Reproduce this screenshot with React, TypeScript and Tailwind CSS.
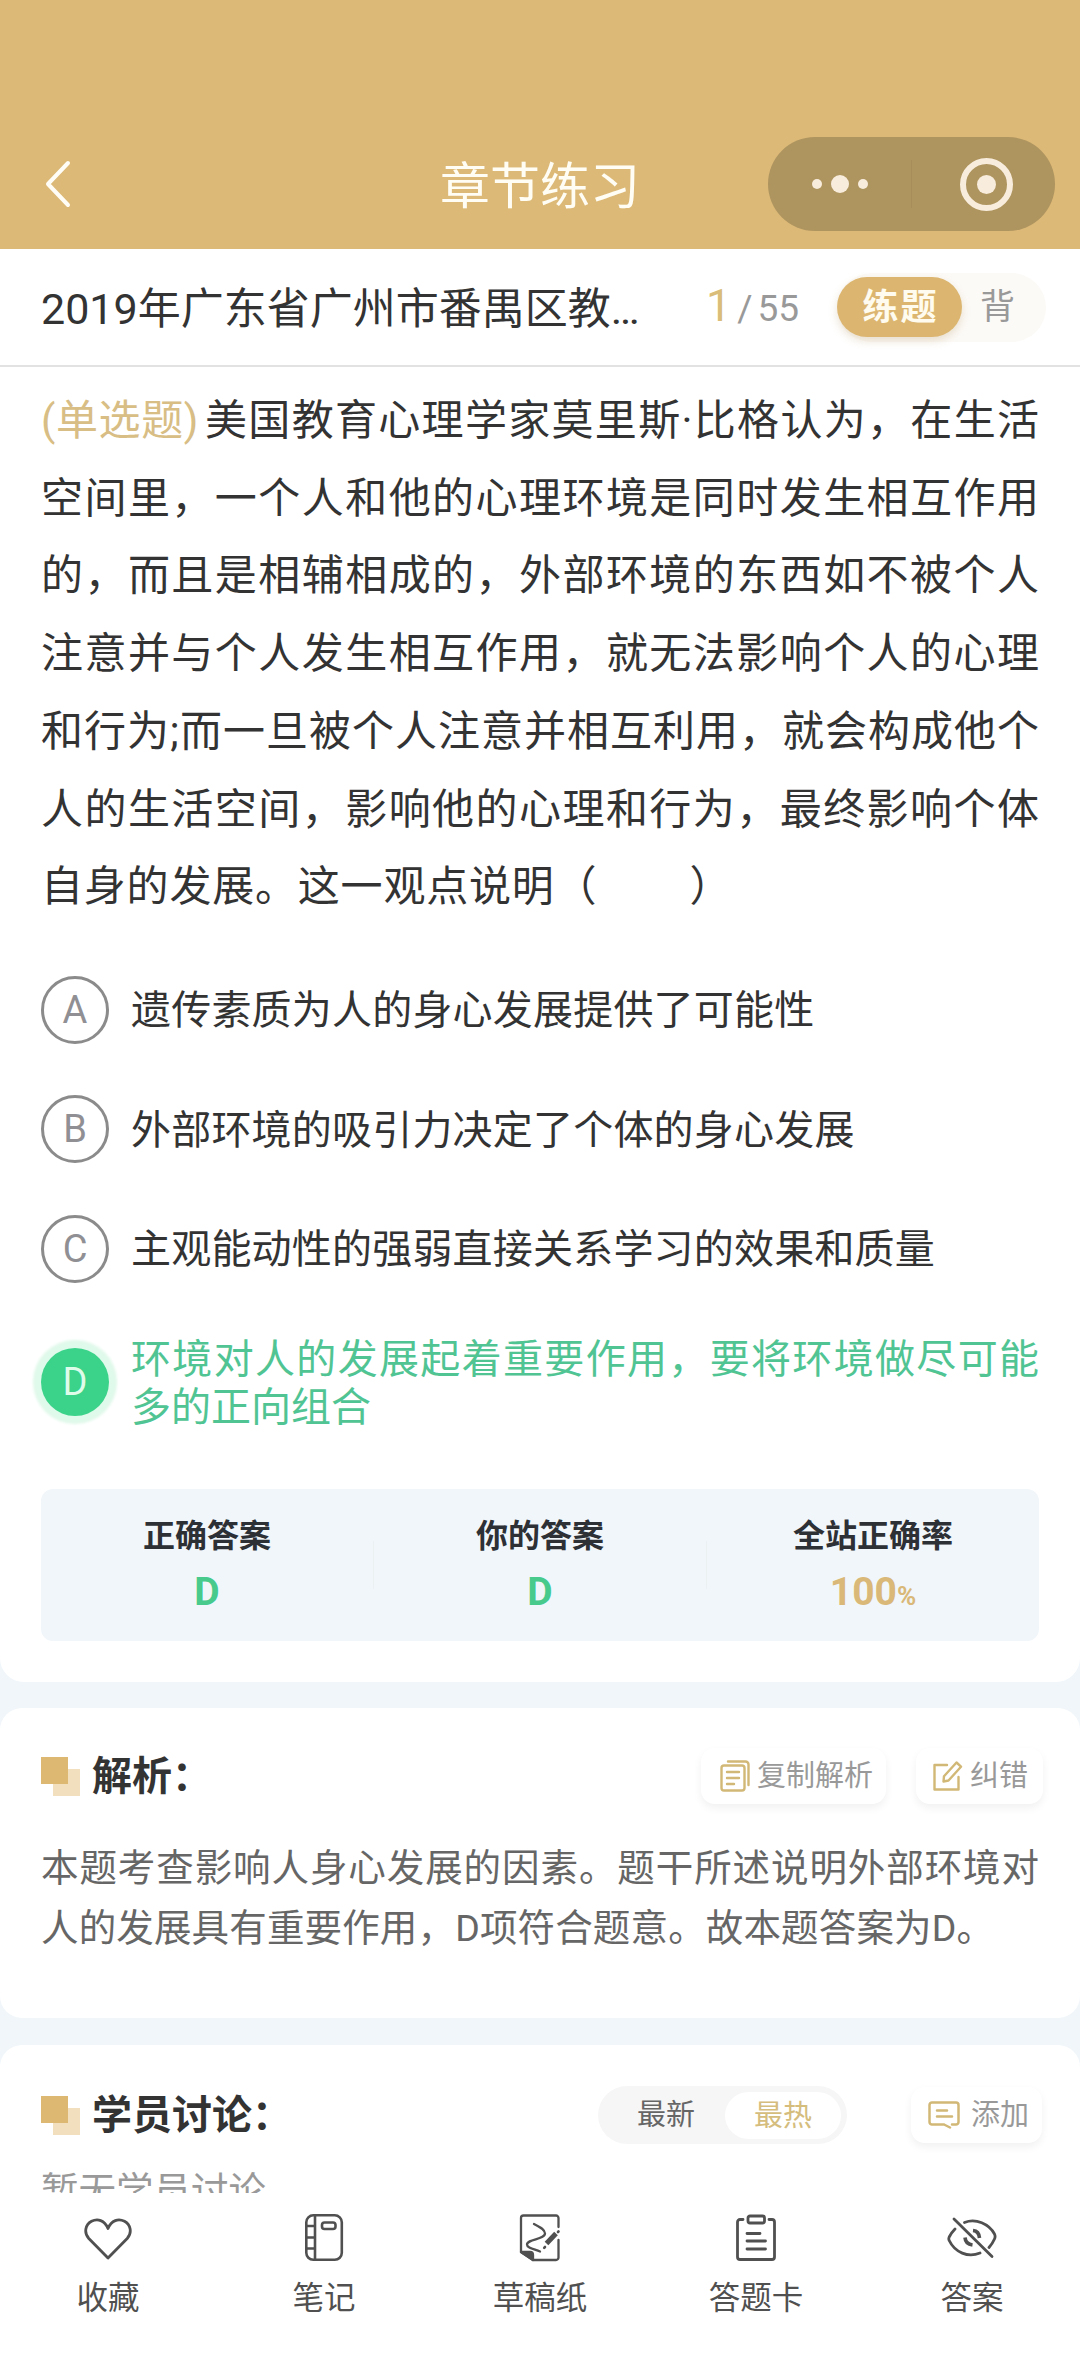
import React from "react";

const questionLines = [
  "空间里，一个人和他的心理环境是同时发生相互作用",
  "的，而且是相辅相成的，外部环境的东西如不被个人",
  "注意并与个人发生相互作用，就无法影响个人的心理",
  "和行为;而一旦被个人注意并相互利用，就会构成他个",
  "人的生活空间，影响他的心理和行为，最终影响个体",
];

const options = [
  { key: "A", text: "遗传素质为人的身心发展提供了可能性" },
  { key: "B", text: "外部环境的吸引力决定了个体的身心发展" },
  { key: "C", text: "主观能动性的强弱直接关系学习的效果和质量" },
];

function Header() {
  return (
    <header className="flex h-[249px] shrink-0 items-end bg-[#dcb977] pb-[18px]">
      <div className="flex h-[94px] w-full items-center justify-between pr-[25px] pl-[43px]">
        <svg width="287" height="50" viewBox="0 0 287 50" fill="none" className="block">
          <path d="M25 4 5 25l20 21" stroke="#fffdf6" strokeWidth="4" strokeLinecap="round" strokeLinejoin="round" />
        </svg>
        <h1 className="mr-[18px] pt-[6px] text-[50px] leading-[60px] text-[#fffdf4]">章节练习</h1>
        <div className="flex h-[94px] w-[287px] items-center rounded-full bg-[#ae945f]">
          <div className="flex w-[143px] items-center justify-center gap-[9px]">
            <span className="size-[10px] rounded-full bg-[#f8ecdc]" />
            <span className="size-[18px] rounded-full bg-[#f8ecdc]" />
            <span className="size-[10px] rounded-full bg-[#f8ecdc]" />
          </div>
          <span className="h-[48px] w-px bg-[#a68d5a]" />
          <div className="flex flex-1 justify-center pl-[5px]">
            <div className="flex size-[53px] items-center justify-center rounded-full border-[6px] border-[#f8ecdc]">
              <span className="size-[19px] rounded-full bg-[#f8ecdc]" />
            </div>
          </div>
        </div>
      </div>
    </header>
  );
}

function TitleRow() {
  return (
    <div className="flex h-[118px] shrink-0 items-center border-b-[2px] border-[#e2e2e2] pl-[41px]">
      <div className="w-[600px] pt-[3px] text-[43px] leading-[60px] whitespace-nowrap text-[#333]">2019年广东省广州市番禺区教…</div>
      <div className="ml-[65px] flex w-[131px] items-baseline leading-[60px] whitespace-nowrap text-[#999]">
        <span className="text-[45px] text-[#d9bd78]">1</span>
        <span className="ml-[6px] text-[37px]">/</span>
        <span className="ml-[5px] text-[37px]">55</span>
      </div>
      <div className="flex h-[69px] w-[209px] items-center rounded-full bg-[#fcfaf7]">
        <div className="h-[60px] w-[125px] rounded-full bg-[#dcb670] pt-px pl-[2px] text-center text-[36px] leading-[60px] font-bold tracking-[2px] text-[#fffbee] shadow-[0_4px_8px_rgba(190,160,110,0.3)]">
          练题
        </div>
        <div className="ml-[18px] pt-[2px] text-[35px] leading-[60px] text-[#999]">背</div>
      </div>
    </div>
  );
}

function Question() {
  return (
    <div className="mx-[41px] mt-[15px] text-[42px] leading-[77.7px] whitespace-nowrap text-[#333]">
      <div className="flex">
        <span className="w-[164px] shrink-0 tracking-[0.6px] text-[#d8bd84]">(单选题)</span>
        <span className="flex-1 [text-align-last:justify]">美国教育心理学家莫里斯·比格认为，在生活</span>
      </div>
      {questionLines.map((line) => (
        <div key={line} className="[text-align-last:justify]">
          {line}
        </div>
      ))}
      <div className="tracking-[0.8px]">
        自身的发展。这一观点说明（<span className="tracking-[4px]">　　</span>）
      </div>
    </div>
  );
}

function Options() {
  return (
    <div className="mx-[41px] mt-[50px] flex flex-col">
      {options.map((o) => (
        <div key={o.key} className="mb-[51.5px] flex h-[68px] items-center">
          <span className="flex size-[68px] items-center justify-center rounded-full border-[3px] border-[#8b8b8b] text-[38px] leading-none text-[#909094]">
            {o.key}
          </span>
          <span className="ml-[22px] pt-[3px] text-[40px] leading-[48px] tracking-[0.2px] whitespace-nowrap text-[#333]">{o.text}</span>
        </div>
      ))}
      <div className="flex h-[96px] items-center">
        <span className="flex size-[68px] shrink-0 items-center justify-center rounded-full bg-[#3ad389] text-[38px] leading-none text-[#dffbe9] shadow-[0_0_3px_8px_#dff9ea]">
          D
        </span>
        <div className="ml-[22px] w-[909px] pt-[4px] text-[40px] leading-[48px] whitespace-nowrap text-[#50c493]">
          <div className="[text-align-last:justify]">环境对人的发展起着重要作用，要将环境做尽可能</div>
          <div>多的正向组合</div>
        </div>
      </div>
    </div>
  );
}

function AnswerStats() {
  return (
    <div className="mx-[41px] mt-[58.6px] flex h-[152px] items-center rounded-[12px] bg-[#f1f6fa] text-center">
      <div className="flex-1">
        <div className="text-[32px] leading-[48px] font-bold text-[#2d3035]">正确答案</div>
        <div className="mt-[5px] h-[54px] text-[39px] leading-[54px] font-bold text-[#47ca8c]">D</div>
      </div>
      <span className="h-[48px] w-px bg-[#ebf0f3]" />
      <div className="flex-1">
        <div className="text-[32px] leading-[48px] font-bold text-[#2d3035]">你的答案</div>
        <div className="mt-[5px] h-[54px] text-[39px] leading-[54px] font-bold text-[#47ca8c]">D</div>
      </div>
      <span className="h-[48px] w-px bg-[#ebf0f3]" />
      <div className="flex-1">
        <div className="text-[32px] leading-[48px] font-bold text-[#2d3035]">全站正确率</div>
        <div className="mt-[5px] h-[54px] text-[39px] leading-[54px] font-bold text-[#d9b878]">
          100<span className="text-[26px] leading-none">%</span>
        </div>
      </div>
    </div>
  );
}

function SectionTitle({ children }: { children: React.ReactNode }) {
  return (
    <div className="flex items-center">
      <svg width="39" height="39" viewBox="0 0 39 39" className="block">
        <rect x="12" y="12" width="27" height="27" fill="#f1dfbd" />
        <rect width="27" height="27" fill="#dcb873" />
      </svg>
      <h2 className="ml-[12px] pt-[2px] text-[40px] leading-[56px] font-bold whitespace-nowrap text-[#333]">{children}</h2>
    </div>
  );
}

function Chip({ className, icon, label }: { className: string; icon: React.ReactNode; label: string }) {
  return (
    <div className={`flex h-[56px] items-center rounded-[14px] bg-white shadow-[0_4px_8px_rgba(0,0,0,0.06)] ${className}`}>
      {icon}
      <span className="text-[29px] leading-[40px] whitespace-nowrap text-[#999]">{label}</span>
    </div>
  );
}

const gold = "#d2b876";

const CopyIcon = (
  <svg width="30" height="32" viewBox="0 0 30 32" fill="none" stroke={gold} strokeWidth="2.4" strokeLinecap="round" strokeLinejoin="round" className="mr-[7px] block">
    <rect x="1.5" y="5.5" width="23" height="25" rx="2.5" />
    <path d="M8 1.5h17.5a3 3 0 0 1 3 3V25M7 12h12M7 18h12M7 24h7" />
  </svg>
);

const EditIcon = (
  <svg width="30" height="30" viewBox="0 0 30 30" fill="none" stroke={gold} strokeWidth="2.4" strokeLinecap="round" strokeLinejoin="round" className="mr-[7px] block">
    <path d="M14 4H1.5v24.500h24V16" />
    <path d="m23.500 1.500 4.500 4.200L15.500 19.500l-5 1 .5-5.300Z" />
  </svg>
);

const CommentIcon = (
  <svg width="32" height="28" viewBox="0 0 32 28" fill="none" stroke={gold} strokeWidth="2.500" strokeLinecap="round" strokeLinejoin="round" className="mr-[11px] block">
    <path d="M16 23.500H4A2.500 2.500 0 0 1 1.500 21V4A2.500 2.500 0 0 1 4 1.500h24A2.500 2.500 0 0 1 30.500 4v17a2.500 2.500 0 0 1-2.500 2.500h-4M16 23.500l6 3M9 9.500h10M9 15.500h15" />
  </svg>
);

function Analysis() {
  return (
    <section className="mt-[26px] h-[310px] shrink-0 rounded-[22px] bg-white px-[41px] pt-[39px]">
      <div className="flex h-[58px] items-center">
        <SectionTitle>解析：</SectionTitle>
        <div className="mr-[-4px] ml-auto flex gap-[30px]">
          <Chip className="w-[185px] pl-[19px]" icon={CopyIcon} label="复制解析" />
          <Chip className="w-[127px] pl-[17px]" icon={EditIcon} label="纠错" />
        </div>
      </div>
      <div className="mt-[33px] text-[37.5px] leading-[60px] whitespace-nowrap text-[#666]">
        <div className="[text-align-last:justify]">本题考查影响人身心发展的因素。题干所述说明外部环境对</div>
        <div className="tracking-[0.15px]">人的发展具有重要作用，D项符合题意。故本题答案为D。</div>
      </div>
    </section>
  );
}

function Discussion() {
  return (
    <section className="mt-[27px] h-[148px] shrink-0 overflow-hidden rounded-t-[22px] bg-white px-[41px] pt-[41px]">
      <div className="flex h-[58px] items-center">
        <SectionTitle>学员讨论：</SectionTitle>
        <div className="mr-[-3px] ml-auto flex items-center gap-[64px]">
          <div className="flex h-[58px] w-[249px] items-center rounded-full bg-[#f6f6f6] px-[6px] text-[29px] leading-[48px]">
            <span className="w-[121px] pl-[33px] text-[#666]">最新</span>
            <span className="h-[47px] w-[116px] rounded-full bg-white text-center text-[#d5bd7e]">最热</span>
          </div>
          <Chip className="w-[131px] pl-[17px]" icon={CommentIcon} label="添加" />
        </div>
      </div>
      <div className="mt-[21px] text-[37.5px] leading-[52px] whitespace-nowrap text-[#999]">暂无学员讨论</div>
    </section>
  );
}

const ink = "#505050";

const HeartIcon = (
  <svg width="48" height="50" viewBox="0 0 48 50" fill="none" stroke={ink} strokeWidth="2.800" strokeLinecap="round" strokeLinejoin="round">
    <path d="M24 45 4.800 25.500C-.5 19.500 1.500 11.500 7.500 8.300c6-3 13-1.300 16.500 7.200 3.500-8.500 10.500-10.200 16.500-7.200 6 3.200 8 11.200 2.700 17.200Z" />
  </svg>
);

const NotebookIcon = (
  <svg width="40" height="50" viewBox="0 0 40 50" fill="none" stroke={ink} strokeWidth="2.600">
    <rect x="2.300" y="2.300" width="35.500" height="44.500" rx="7" />
    <path d="M11 2.300v44.500M2.300 13H11M2.300 24.500H11M2.300 35.500H11" />
    <rect x="18" y="9.500" width="13.500" height="6.500" rx="2.500" />
  </svg>
);

const DraftIcon = (
  <svg width="42" height="50" viewBox="0 0 42 50" fill="none" stroke={ink} strokeWidth="2.300" strokeLinecap="round" strokeLinejoin="round">
    <path d="M39.500 14V5A2.500 2.500 0 0 0 37 2.500H4.500A2.500 2.500 0 0 0 2 5v34l12 8h23a2.500 2.500 0 0 0 2.500-2.500V27" />
    <path d="M2 39h9q3 0 3 3v5Z" fill={ink} />
    <path d="M15 11c7 3.500 11 6 11 9.500 0 6-18 5.500-18 11 0 3.500 7 4.500 13 7" />
    <path d="m37 20.500-9.500 10" strokeWidth="5" strokeLinecap="butt" />
    <path d="m39 19 .5-.5M26 34l-.8.8" strokeWidth="2.600" />
  </svg>
);

const ClipboardIcon = (
  <svg width="42" height="50" viewBox="0 0 42 50" fill="none" stroke={ink} strokeWidth="2.800" strokeLinecap="round" strokeLinejoin="round">
    <path d="M8 6.500H5A2.500 2.500 0 0 0 2.500 9v35A2.500 2.500 0 0 0 5 46.500h32a2.500 2.500 0 0 0 2.500-2.500V9A2.500 2.500 0 0 0 37 6.500h-3" />
    <rect x="13" y="3" width="16.500" height="7" rx="2" />
    <path d="M12 20.500h13M12 28h18.500M12 36h18.500" />
  </svg>
);

const EyeOffIcon = (
  <svg width="50" height="50" viewBox="0 0 50 50" fill="none" stroke={ink} strokeWidth="2.800" strokeLinecap="round" strokeLinejoin="round">
    <path d="M17.500 9.500C29 5 42 11 47.500 21q1.200 2.500 0 5-2 4.500-5.500 8.500" />
    <path d="M8 16q-3.500 3.500-5.800 8-.8 1.800 0 3.500C8 39.500 21 45 33 40" />
    <path d="m7 6 38 37.500" />
    <path d="M26 17.500q6 .5 6.500 7.500M18 24.500q.5 6.500 7.500 7.500" strokeWidth="3.600" strokeLinecap="butt" />
  </svg>
);

const navItems = [
  { label: "收藏", icon: HeartIcon },
  { label: "笔记", icon: NotebookIcon },
  { label: "草稿纸", icon: DraftIcon },
  { label: "答题卡", icon: ClipboardIcon },
  { label: "答案", icon: EyeOffIcon },
];

function BottomNav() {
  return (
    <nav className="grid h-[183px] shrink-0 grid-cols-5 bg-white pt-[20px]">
      {navItems.map((item) => (
        <div key={item.label} className="flex flex-col items-center">
          {item.icon}
          <span className="mt-[15px] text-[31.500px] leading-[42px] text-[#505050]">{item.label}</span>
        </div>
      ))}
    </nav>
  );
}

export default function App() {
  return (
    <div
      lang="zh-CN"
      className="flex h-[2376px] w-[1080px] flex-col overflow-hidden bg-[#f1f6fa] font-['Roboto','Noto_Sans_CJK_SC',sans-serif]"
    >
      <Header />
      <main className="flex h-[1433px] shrink-0 flex-col rounded-b-[24px] bg-white">
        <TitleRow />
        <Question />
        <Options />
        <AnswerStats />
      </main>
      <Analysis />
      <Discussion />
      <BottomNav />
    </div>
  );
}
